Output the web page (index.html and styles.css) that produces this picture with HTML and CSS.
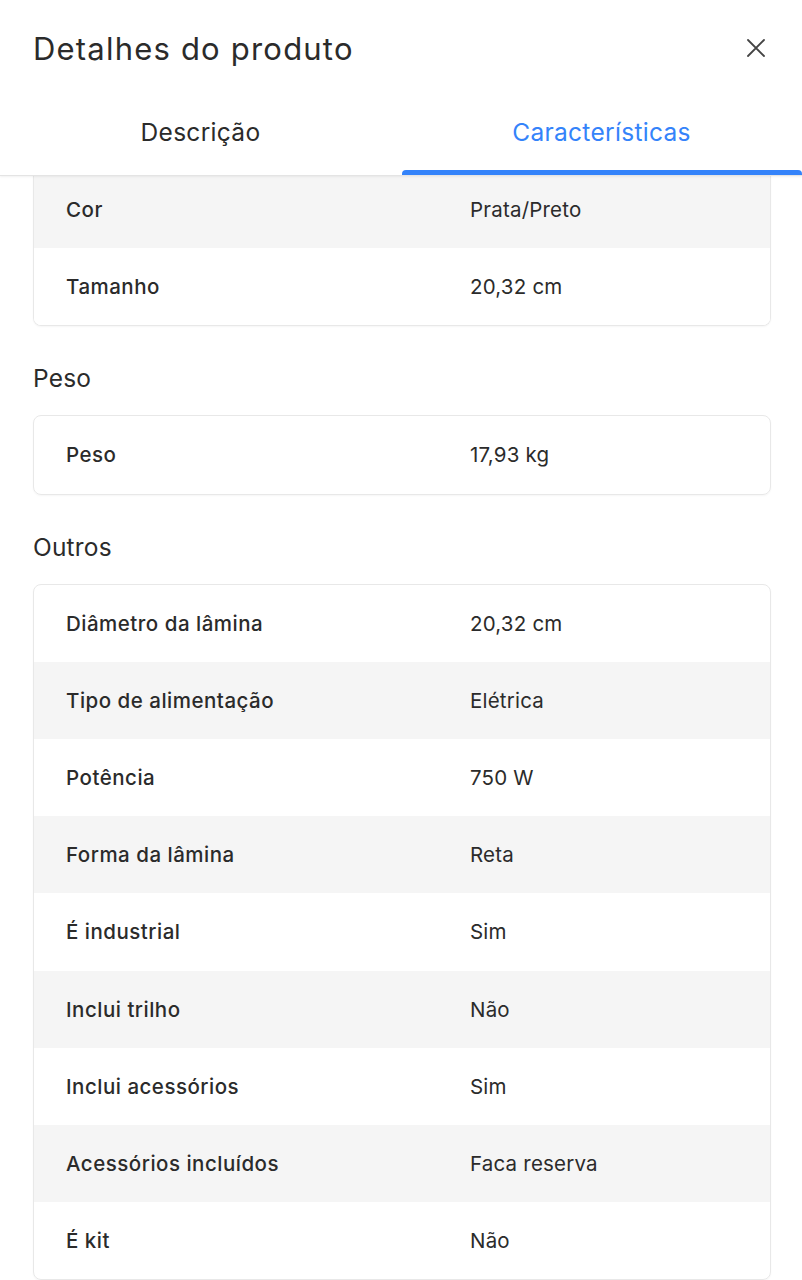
FILE: index.html
```html
<!DOCTYPE html>
<html lang="pt-BR">
<head>
  <meta charset="UTF-8" />
  <meta name="viewport" content="width=device-width, initial-scale=1.0" />
  <title>Detalhes do produto</title>
  <link rel="stylesheet" href="styles.css">
</head>
<body>
  <div class="sheet">
    <header class="sheet-header">
      <div class="title-row">
        <h1>Detalhes do produto</h1>
        <button class="close" aria-label="Fechar">
          <svg width="20" height="20" viewBox="0 0 20 20"><path d="M2 2 L18 18 M18 2 L2 18" stroke="#444" stroke-width="1.8" fill="none" stroke-linecap="round"/></svg>
        </button>
      </div>
      <nav class="tabs">
        <button class="tab">Descrição</button>
        <button class="tab active">Características</button>
      </nav>
    </header>

    <main class="content">
      <div class="card first">
        <div class="row"><span class="label">Cor</span><span class="value">Prata/Preto</span></div>
        <div class="row"><span class="label">Tamanho</span><span class="value">20,32 cm</span></div>
      </div>

      <h2>Peso</h2>
      <div class="card">
        <div class="row"><span class="label">Peso</span><span class="value">17,93 kg</span></div>
      </div>

      <h2>Outros</h2>
      <div class="card">
        <div class="row"><span class="label">Diâmetro da lâmina</span><span class="value">20,32 cm</span></div>
        <div class="row"><span class="label">Tipo de alimentação</span><span class="value">Elétrica</span></div>
        <div class="row"><span class="label">Potência</span><span class="value">750 W</span></div>
        <div class="row"><span class="label">Forma da lâmina</span><span class="value">Reta</span></div>
        <div class="row"><span class="label">É industrial</span><span class="value">Sim</span></div>
        <div class="row"><span class="label">Inclui trilho</span><span class="value">Não</span></div>
        <div class="row"><span class="label">Inclui acessórios</span><span class="value">Sim</span></div>
        <div class="row"><span class="label">Acessórios incluídos</span><span class="value">Faca reserva</span></div>
        <div class="row"><span class="label">É kit</span><span class="value">Não</span></div>
      </div>
    </main>
  </div>
</body>
</html>
```

FILE: styles.css
```css
:root {
  --text: #2b2b2b;
  --blue: #3483fa;
  --stripe: #f5f5f5;
  --border: #e8e8e8;
}
* {
  box-sizing: border-box;
}
html, body {
  margin: 0;
  height: 100%;
}
body {
  background: #fff;
  color: var(--text);
  font-family: Inter, "Open Sans", Arial, sans-serif;
}
.sheet {
  height: 1280px;
  display: flex;
  flex-direction: column;
  overflow: hidden;
}
.sheet-header {
  flex: none;
  position: relative;
  z-index: 1;
  background: #fff;
  border-bottom: 1px solid #e4e4e4;
  box-shadow: 0 1px 2px rgba(0,0,0,0.06);
}
.title-row {
  height: 96px;
  display: flex;
  align-items: center;
  justify-content: space-between;
  padding: 0 36px 0 33px;
}
h1 {
  margin: 0;
  font-size: 31px;
  font-weight: 400;
  letter-spacing: 1.2px;
}
.close {
  border: none;
  background: none;
  padding: 0;
  width: 20px;
  height: 20px;
  cursor: pointer;
}
.tabs {
  display: grid;
  grid-template-columns: 1fr 1fr;
  height: 79px;
}
.tab {
  border: none;
  background: none;
  font-family: inherit;
  font-size: 24.5px;
  letter-spacing: 0.3px;
  color: var(--text);
  padding: 0 0 8px;
  position: relative;
  cursor: pointer;
}
.tab.active {
  color: var(--blue);
}
.tab.active::after {
  content: "";
  position: absolute;
  left: 1px;
  right: 0;
  bottom: 0;
  height: 5px;
  background: var(--blue);
  border-radius: 4px 4px 0 0;
}
.content {
  flex: 1;
  overflow: hidden;
  padding: 0 31px 0 33px;
}
.card {
  border: 1px solid var(--border);
  border-radius: 8px;
  overflow: hidden;
  box-shadow: 0 1px 2px rgba(0,0,0,0.04);
}
.card.first {
  margin-top: -5px;
  border-top: none;
  border-radius: 0 0 8px 8px;
}
.card.first .row:first-child {
  background: var(--stripe);
}
.card.first .row:nth-child(2) {
  background: #fff;
}
.row {
  display: grid;
  grid-template-columns: 404px 1fr;
  align-items: center;
  height: 77.2px;
  padding-left: 32px;
  font-size: 20.5px;
}
.row:nth-child(even) {
  background: var(--stripe);
}
.label {
  font-weight: 500;
  letter-spacing: 0.5px;
}
.value {
  letter-spacing: 0.2px;
}
h2 {
  margin: 37px 0 22px;
  font-size: 24.5px;
  line-height: 30px;
  font-weight: 400;
  letter-spacing: 0.2px;
}
```
